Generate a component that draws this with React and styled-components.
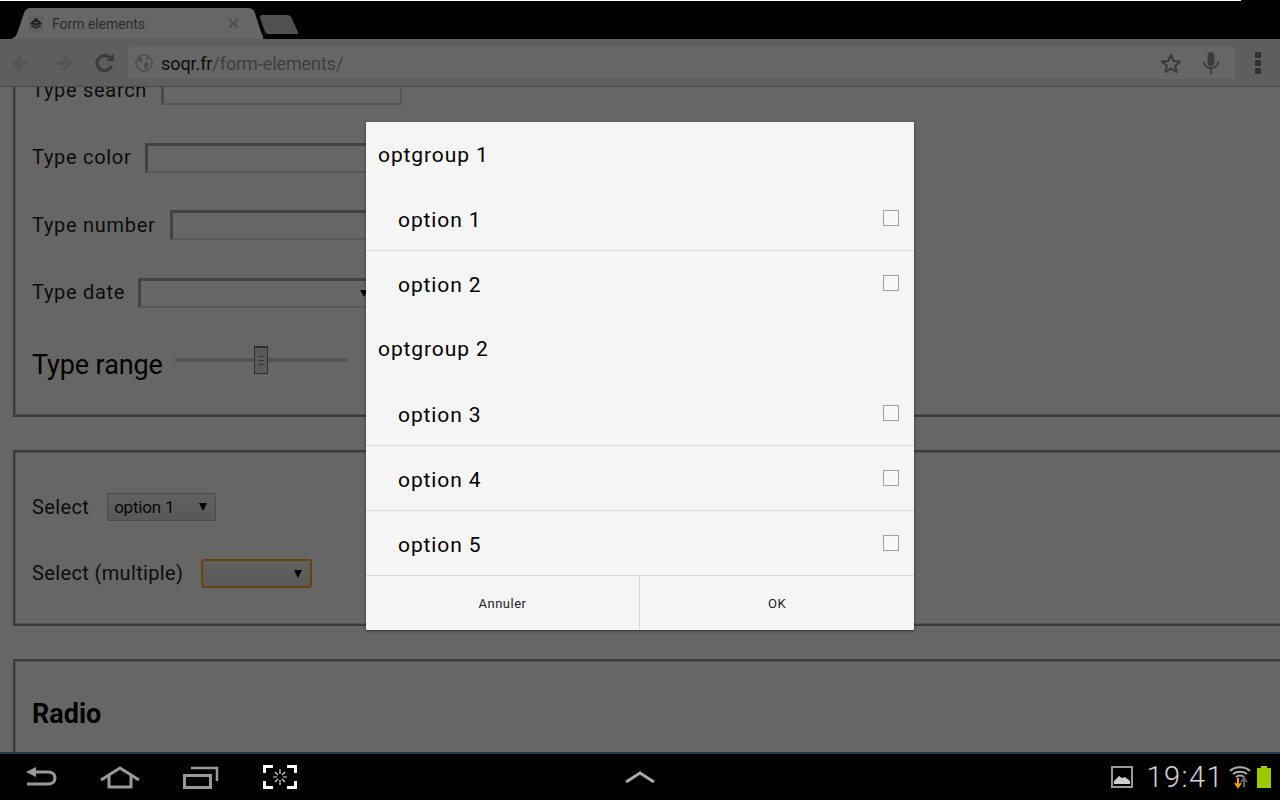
import React from "react";
import styled, { createGlobalStyle } from "styled-components";

const Global = createGlobalStyle`
  html, body { margin: 0; padding: 0; background: #000; }
  body { font-family: Roboto, "Open Sans", sans-serif; }
  * { box-sizing: border-box; }
`;

const Screen = styled.div`
  position: relative; width: 1280px; height: 800px; overflow: hidden;
  display: flex; flex-direction: column; background: #fff;
`;
const TopLine = styled.div`
  position: absolute; top: 0; left: 0; width: 1241px; height: 1px; background: #fff; z-index: 5;
`;
const TabStrip = styled.div`
  height: 39px; flex: none; background: #000; position: relative;
  display: flex; align-items: flex-end; padding-left: 9px;
`;
const TabShape = styled.div`
  position: relative; width: 254px; height: 31px;
  display: flex; align-items: center; padding: 0 24px 0 19px; font-size: 14px;
`;
const TabBg = styled.svg`
  position: absolute; left: 0; top: 0; width: 254px; height: 31px;
`;
const TabTitle = styled.span`
  position: relative; flex: 1; margin-left: 8px; margin-top: 1px; color: #707070; letter-spacing: -.05px;
`;
const NewTab = styled.svg`
  width: 40px; height: 19px; margin-left: -4px; margin-bottom: 5px; flex: none;
`;
const Toolbar = styled.div`
  height: 48px; flex: none; background: #ececec; border-bottom: 1px solid #b2b2b2;
  display: flex; align-items: center; padding: 0 0 0 10px;
`;
const NavIcon = styled.svg`
  width: 22px; height: 20px; flex: none; margin-right: ${p => p.$gap}px;
`;
const Omnibox = styled.div`
  width: 1107px; height: 32px; margin-top: 1px; background: #fff; border-radius: 2px; flex: none;
  display: flex; align-items: center; padding: 0 16px 0 7px;
`;
const Url = styled.div`
  flex: 1; margin-left: 8px; font-size: 18px; color: #9e9e9e; letter-spacing: -.08px;
  b { font-weight: 400; color: #222; }
`;
const MenuDots = styled.div`
  margin-left: 20px; margin-top: 1px; display: flex; flex-direction: column; gap: 2px;
  i { display: block; width: 6px; height: 6px; border-radius: 1px; background: #787878; }
`;
const ViewPort = styled.div`
  flex: 1; overflow: hidden; background: #fff;
`;
const Scroller = styled.div`
  margin-top: -87px; width: 1340px; padding-left: 13px;
`;
const Fieldset = styled.div`
  width: 1300px; height: ${p => p.$h}px; border: 2px solid #959595;
  box-shadow: inset 0 0 0 1px #cfcfcf;
  padding: ${p => p.$pt}px 0 0 17px; margin-bottom: 33px;
`;
const Row = styled.div`
  height: ${p => p.$h || 67.5}px; display: flex; align-items: center; gap: ${p => p.$gap || 14}px;
`;
const Label = styled.span`
  font-size: 20px; color: #1e1e1e; letter-spacing: ${p => p.$wide ? ".7px" : ".36px"}; white-space: nowrap;
`;
const BigLabel = styled.span`
  font-size: 27px; color: #000; white-space: nowrap; margin-top: 11px; letter-spacing: -.1px;
`;
const Field = styled.div`
  width: ${p => p.$w}px; height: 30px; position: relative; margin-top: 1px;
  border-style: solid; border-color: #a6a6a6 #dcdcdc #dcdcdc #a6a6a6;
  border-width: 3px 2px 2px 3px;
  ${p => p.$faint && "border-color: #d0d0d0 #d8d8d8 #d8d8d8 #b8b8b8;"}
`;
const FieldArrow = styled.span`
  position: absolute; right: 2px; top: 9px; width: 0; height: 0;
  border-left: 4px solid transparent; border-right: 4px solid transparent; border-top: 7px solid #000;
`;
const Range = styled.div`
  width: 172px; height: 28px; position: relative; flex: none; margin-left: -2px;
`;
const Track = styled.div`
  position: absolute; left: 0; right: 0; top: 12px; height: 4px; background: #d3d0cb;
`;
const Thumb = styled.div`
  position: absolute; left: 79px; top: 0; width: 14px; height: 28px;
  background: #e2e2e2; border: 1px solid #777; border-top-width: 2px;
  display: flex; flex-direction: column; justify-content: center; gap: 3px; padding: 0 3px;
  i { display: block; height: 1px; background: #888; }
`;
const SelectBox = styled.div`
  width: ${p => p.$w}px; height: ${p => p.$h}px; flex: none; position: relative; margin-top: 1px;
  background: linear-gradient(#f2f2f2, #dcdcdc);
  border-style: solid; border-color: ${p => p.$focus ? "#ffa914" : "#bbb"};
  border-width: ${p => p.$focus ? "2px" : "1px"};
  border-radius: ${p => p.$focus ? "3px" : "1px"};
  font-size: 17px; color: #111; padding-left: 6px; line-height: 26px; letter-spacing: -.2px;
`;
const SelectArrow = styled.span`
  position: absolute; right: ${p => p.$r}px; top: 9px; width: 0; height: 0;
  border-left: 4px solid transparent; border-right: 4px solid transparent; border-top: 8px solid #000;
`;
const Heading = styled.h2`
  margin: 37px 0 0; font-size: 27px; font-weight: 700; color: #000; line-height: 32px;
`;
const Overlay = styled.div`
  position: absolute; inset: 0 0 48px 0; background: rgba(0,0,0,.6);
  display: flex; align-items: center; justify-content: center;
`;
const Dialog = styled.div`
  width: 548px; height: 508px; background: #f5f5f5; border-radius: 1px;
  box-shadow: 0 1px 3px rgba(0,0,0,.5); display: flex; flex-direction: column; overflow: hidden;
`;
const Group = styled.div`
  height: ${p => p.$h}px; padding: 18px 0 0 12px; font-size: 21px; line-height: 31px; color: #000; letter-spacing: .9px; flex: none;
`;
const Option = styled.div`
  height: 65px; flex: none; display: flex; align-items: center; justify-content: space-between;
  padding: 0 15px 0 32px; font-size: 21px; color: #000; letter-spacing: .9px;
  border-bottom: 1px solid ${p => p.$plain ? "transparent" : "#d9d9d9"};
  span { margin-top: 3px; }
`;
const Check = styled.i`
  display: block; width: 16px; height: 16px; border: 1px solid #a0a0a0; background: #f8f8f8;
`;
const Buttons = styled.div`
  flex: 1; display: flex;
`;
const DialogButton = styled.div`
  flex: ${p => p.$w ? `0 0 ${p.$w}px` : 1}; display: flex; align-items: center; justify-content: center;
  font-size: 13px; color: #222; letter-spacing: .5px;
  & + & { border-left: 1px solid #d9d9d9; }
`;
const NavBar = styled.div`
  height: 48px; flex: none; background: #000; border-top: 2px solid #1d3e4c; position: relative;
  display: flex; align-items: center; padding: 0 9px 0 22px;
`;
const SysIcon = styled.svg`
  flex: none; display: block; margin-right: ${p => p.$mr || 0}px;
`;
const Spacer = styled.div` flex: 1; `;
const Clock = styled.span`
  font-size: 29px; color: #d0d0d0; letter-spacing: 1.4px; margin: 0 5px 0 14px; font-weight: 300;
`;

const Arrow = ({ flip, color }) => (
  <NavIcon $gap={20} viewBox="0 0 22 20" fill="none" stroke={color} strokeWidth="4">
    {flip
      ? <path d="M3 10h15M11 3l7 7-7 7" />
      : <path d="M19 10H4M11 3l-7 7 7 7" />}
  </NavIcon>
);

export default function App() {
  return (
    <Screen>
      <Global />
      <TopLine />
      <TabStrip>
        <TabShape>
          <TabBg viewBox="0 0 254 31">
            <path d="M0 31C6 31 8 27 10 20L15 5C16 2 18 0 22 0H238C243 0 245 2 246 5L251 21C253 28 256 31 262 31Z" fill="#fff" />
          </TabBg>
          <svg width="16" height="16" viewBox="0 0 16 16" style={{ position: "relative", flex: "none" }}>
            <rect width="16" height="16" fill="#f3f3f3" />
            <path d="M8 1.500L14 7.500 8 10 2 7.500Z" fill="#555" />
            <path d="M3 9.500L8 12l5-2.500" stroke="#555" strokeWidth="1.400" fill="none" />
            <path d="M6 6.500h4" stroke="#ddd" strokeWidth="1" />
          </svg>
          <TabTitle>Form elements</TabTitle>
          <svg width="11" height="11" viewBox="0 0 11 11" style={{ position: "relative" }}>
            <path d="M1 1l9 9M10 1l-9 9" stroke="#c4c4c4" strokeWidth="2.200" />
          </svg>
        </TabShape>
        <NewTab viewBox="0 0 40 19">
          <path d="M1 3C.6 1 2 0 3 0H28C31 0 32 1 33 4L39 17C39.500 18 39 19 38 19H10C7 19 6 17.500 5.500 15.500Z" fill="#c8c8c8" />
        </NewTab>
      </TabStrip>
      <Toolbar>
        <Arrow color="#d5d5d5" />
        <Arrow color="#d5d5d5" flip />
        <NavIcon $gap={12} viewBox="0 0 22 20" fill="none">
          <path d="M17.500 13A7.500 7.500 0 1 1 15.500 4.500" stroke="#969696" strokeWidth="3.400" />
          <path d="M12 8h8V0Z" fill="#969696" />
        </NavIcon>
        <Omnibox>
          <svg width="18" height="18" viewBox="0 0 18 18" fill="none">
            <circle cx="9" cy="9" r="8" stroke="#bbb" strokeWidth="1.500" />
            <path d="M5 2.500l3 3.500-2.500 2.500-3-2M10 8l4 1.500-2 5-2 1.500-1-4.500ZM11 2l3 3-3 1Z" fill="#bbb" />
          </svg>
          <Url><b>soqr.fr</b>/form-elements/</Url>
          <svg width="22" height="21" viewBox="0 0 22 21" fill="none" style={{ marginRight: 21 }}>
            <path d="M11 2l2.700 6 6.300.6-4.800 4.200 1.500 6.200-5.700-3.300L5.300 19l1.500-6.200L2 8.600 8.300 8Z" stroke="#8f8f8f" strokeWidth="2" strokeLinejoin="round" />
          </svg>
          <svg width="16" height="22" viewBox="0 0 16 22" fill="none">
            <rect x="4.500" y="0" width="7" height="14" rx="3.500" fill="#9a9a9a" />
            <path d="M1 9.500c0 4 3 6.500 7 6.500s7-2.500 7-6.500M8 16v6" stroke="#9a9a9a" strokeWidth="1.800" />
          </svg>
        </Omnibox>
        <MenuDots><i /><i /><i /></MenuDots>
      </Toolbar>
      <ViewPort>
        <Scroller>
          <Fieldset $h={417} $pt={54}>
            <Row $gap={14}><Label $wide>Type search</Label><Field $w={241} $faint /></Row>
            <Row $gap={14}><Label $wide>Type color</Label><Field $w={241} /></Row>
            <Row $gap={15}><Label $wide>Type number</Label><Field $w={241} /></Row>
            <Row $gap={13}><Label $wide>Type date</Label><Field $w={234}><FieldArrow /></Field></Row>
            <Row><BigLabel>Type range</BigLabel><Range><Track /><Thumb><i /><i /><i /></Thumb></Range></Row>
          </Fieldset>
          <Fieldset $h={176} $pt={21.5}>
            <Row $h={66} $gap={18}>
              <Label>Select</Label>
              <SelectBox $w={109} $h={28}>option 1<SelectArrow $r={8} /></SelectBox>
            </Row>
            <Row $h={66} $gap={18}>
              <Label>Select (multiple)</Label>
              <SelectBox $w={111} $h={29} $focus><SelectArrow $r={8} /></SelectBox>
            </Row>
          </Fieldset>
          <Fieldset $h={200} $pt={0}>
            <Heading>Radio</Heading>
          </Fieldset>
        </Scroller>
      </ViewPort>
      <NavBar>
        <SysIcon $mr={42} width="36" height="26" viewBox="0 0 36 26" fill="none">
          <path d="M4 8l10-5v10Z" fill="#999" />
          <path d="M10 8h16c5 0 7 3 7 6s-2 6-7 6H5" stroke="#999" strokeWidth="3" />
        </SysIcon>
        <SysIcon $mr={43} width="40" height="24" viewBox="0 0 40 24" fill="none">
          <path d="M1 15L20 3l19 12M9 11v11h22V11" stroke="#999" strokeWidth="3" />
        </SysIcon>
        <SysIcon $mr={44} width="36" height="24" viewBox="0 0 36 24" fill="none">
          <path d="M8 3h26v13" stroke="#999" strokeWidth="2.500" />
          <rect x="1.500" y="10.500" width="26" height="12" stroke="#999" strokeWidth="3" />
        </SysIcon>
        <SysIcon width="34" height="24" viewBox="0 0 34 24" fill="none">
          <path d="M1.500 8V1.500H10M24 1.500h8.500V8M1.500 16v6.500H10M24 22.500h8.500V16" stroke="#fff" strokeWidth="3" />
          <path d="M17 4v5M17 15v5M10 12h4M20 12h4M12 7l3 3M22 7l-3 3M12 17l3-3M22 17l-3-3" stroke="#ddd" strokeWidth="1.200" />
        </SysIcon>
        <Spacer />
        <SysIcon $mr={456} width="30" height="14" viewBox="0 0 30 14" fill="none">
          <path d="M1 12L15 3l14 9" stroke="#aaa" strokeWidth="3" />
        </SysIcon>
        <SysIcon width="22" height="22" viewBox="0 0 22 22" fill="none">
          <rect x="1" y="1" width="20" height="20" stroke="#999" strokeWidth="2" />
          <path d="M3 18v-3l5-5 3 2 3-1 5 4v3Z" fill="#ccc" />
        </SysIcon>
        <Clock>19:41</Clock>
        <SysIcon $mr={6} width="22" height="24" viewBox="0 0 22 24" fill="none">
          <path d="M1 6c5-5 15-5 20 0M4 9c4-3 10-3 14 0M7 12c2-2 6-2 8 0" stroke="#aaa" strokeWidth="2" />
          <path d="M9 13v7M6 18l3 4 3-4" stroke="#f59a23" strokeWidth="2" />
          <path d="M15 22v-7M12 17l3-4 3 4" stroke="#666" strokeWidth="2" />
        </SysIcon>
        <SysIcon width="14" height="22" viewBox="0 0 14 22">
          <path d="M4 0h6v2h4v20H0V2h4Z" fill="#99cc00" />
        </SysIcon>
      </NavBar>
      <Overlay>
        <Dialog>
          <Group $h={64}>optgroup 1</Group>
          <Option><span>option 1</span><Check /></Option>
          <Option $plain><span>option 2</span><Check /></Option>
          <Group $h={65}>optgroup 2</Group>
          <Option><span>option 3</span><Check /></Option>
          <Option><span>option 4</span><Check /></Option>
          <Option><span>option 5</span><Check /></Option>
          <Buttons>
            <DialogButton $w={273}>Annuler</DialogButton>
            <DialogButton>OK</DialogButton>
          </Buttons>
        </Dialog>
      </Overlay>
    </Screen>
  );
}
